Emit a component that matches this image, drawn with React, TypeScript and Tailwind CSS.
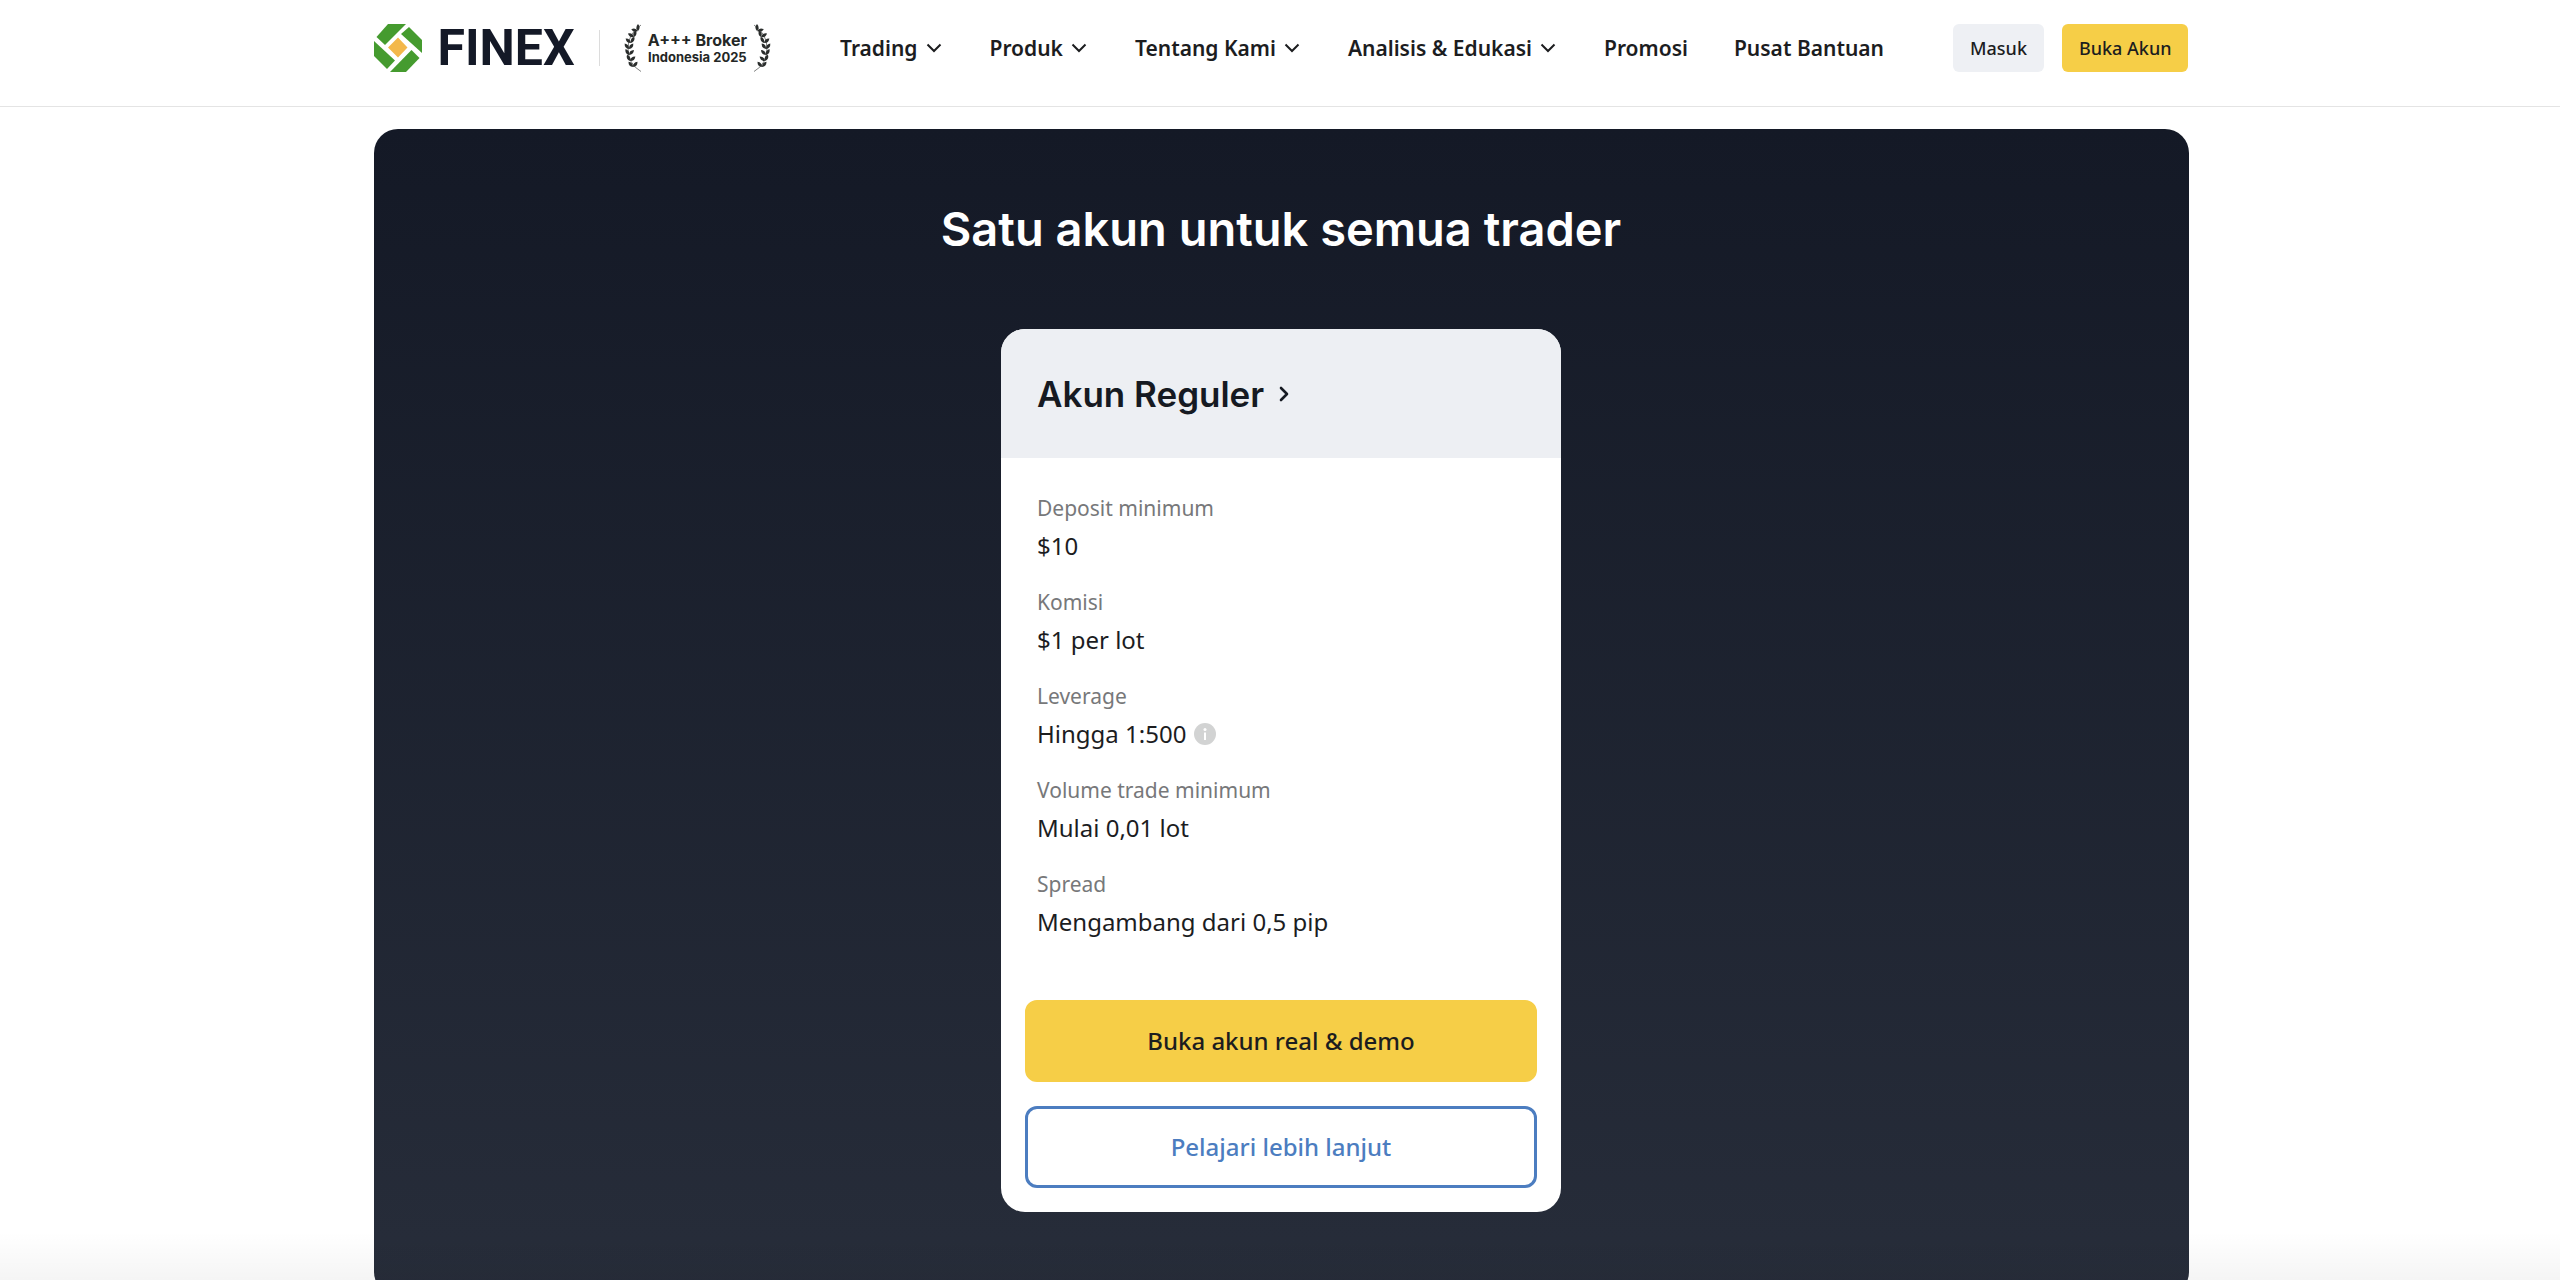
import { ChevronRight } from "lucide-react";

const NAV_ITEMS = [
  { label: "Trading", menu: true },
  { label: "Produk", menu: true },
  { label: "Tentang Kami", menu: true },
  { label: "Analisis & Edukasi", menu: true },
  { label: "Promosi", menu: false },
  { label: "Pusat Bantuan", menu: false },
];

const FEATURES = [
  { label: "Deposit minimum", value: "$10" },
  { label: "Komisi", value: "$1 per lot" },
  { label: "Leverage", value: "Hingga 1:500", info: true },
  { label: "Volume trade minimum", value: "Mulai 0,01 lot" },
  { label: "Spread", value: "Mengambang dari 0,5 pip" },
];

function LogoMark() {
  return (
    <svg viewBox="0 0 48 48" className="size-12" aria-hidden="true">
      <g fill="#459b2f">
        <path d="M14 0H32L11 21L2.500 13Z" />
        <path d="M35 3L48 16V29L27 10Z" />
        <path d="M37.500 26L45.500 34L32 48H16Z" />
        <path d="M0 17L21 36.500L13 45L0 32Z" />
      </g>
      <path d="M24 13.500L33.500 23.500L24 33.500L14 23.500Z" fill="#f3b84b" />
    </svg>
  );
}

function Chevron() {
  return (
    <svg viewBox="0 0 20 20" className="size-5" fill="none" stroke="currentColor" strokeWidth="2" aria-hidden="true">
      <path d="M3.500 6.500L10 13L16.500 6.500" />
    </svg>
  );
}

const LEAVES = [
  { x: 14, y: 3, out: -75, inn: 0 },
  { x: 10, y: 9, out: -60, inn: 15 },
  { x: 7, y: 15, out: -50, inn: 28 },
  { x: 5, y: 21, out: -38, inn: 38 },
  { x: 5, y: 27, out: -30, inn: 45 },
  { x: 6, y: 33, out: -25, inn: 50 },
  { x: 9, y: 39, out: -40, inn: 40 },
];

function Laurel({ flip = false }: { flip?: boolean }) {
  return (
    <svg viewBox="0 0 18 48" className="h-12 w-[18px]" fill="#2a2d2c" aria-hidden="true">
      <g transform={flip ? "translate(18 0) scale(-1 1)" : undefined}>
        <path d="M17 1Q4 10 4 24Q4 40 17 47.500" fill="none" stroke="#2a2d2c" strokeWidth="0.6" />
        {LEAVES.map((leaf) => (
          <g key={leaf.y} transform={`translate(${leaf.x} ${leaf.y + 4})`}>
            <path d="M0 0Q-3.200 -3.500 0 -7Q3.200 -3.500 0 0Z" transform={`rotate(${leaf.out})`} />
            <path d="M0 0Q-3.200 -3.500 0 -7Q3.200 -3.500 0 0Z" transform={`rotate(${leaf.inn})`} />
          </g>
        ))}
      </g>
    </svg>
  );
}

function InfoIcon() {
  return (
    <svg viewBox="0 0 22 22" className="size-[22px]" aria-hidden="true">
      <circle cx="11" cy="11" r="11" fill="#d2d3d3" />
      <circle cx="11" cy="6.500" r="1.500" fill="#fff" />
      <rect x="10" y="9.500" width="2" height="7.500" fill="#fff" />
    </svg>
  );
}

export default function App() {
  return (
    <div className="relative h-screen overflow-hidden bg-white font-['Noto_Sans',sans-serif] text-[#1c1d1f]">
      <header className="border-b border-[#e4e4e4] pt-6 pr-6 pb-[34px] pl-[26px]">
        <div className="mx-auto flex h-12 max-w-[1815px] items-center justify-between">
          <div className="flex items-center">
            <a href="#beranda" className="flex items-center gap-4" aria-label="FINEX">
              <LogoMark />
              <span className="font-['Roboto',sans-serif] text-[50px] leading-12 font-bold text-[#141927]">FINEX</span>
            </a>
            <div className="ml-6 h-9 w-px bg-[#dcdcdc]" />
            <div className="ml-6 flex items-center gap-1.5">
              <Laurel />
              <div className="flex flex-col text-center font-['Inter',sans-serif] font-bold text-[#242726]">
                <span className="text-[16px] leading-[18px]">A+++ Broker</span>
                <span className="text-[13px] leading-4">Indonesia 2025</span>
              </div>
              <Laurel flip />
            </div>
          </div>

          <nav className="flex items-center gap-[46px] text-[21px] leading-7 font-semibold">
            {NAV_ITEMS.map((item) =>
              item.menu ? (
                <button key={item.label} type="button" className="flex items-center gap-1.5">
                  {item.label}
                  <Chevron />
                </button>
              ) : (
                <a key={item.label} href="#menu">
                  {item.label}
                </a>
              ),
            )}
          </nav>

          <div className="flex gap-[18px] text-[18px] font-medium">
            <button type="button" className="h-12 rounded-md bg-[#eef0f4] px-[17px]">
              Masuk
            </button>
            <button type="button" className="h-12 rounded-md bg-[#f6ce47] px-[17px]">
              Buka Akun
            </button>
          </div>
        </div>
      </header>

      <main className="pt-[22px] pr-6 pl-[26px]">
        <section className="mx-auto flex max-w-[1815px] flex-col items-center rounded-3xl bg-linear-to-b from-[#141926] to-[#272d3a] px-6 pt-[68px] pb-[84px]">
          <h1 className="text-center font-['Inter',sans-serif] text-[47px] leading-16 font-semibold text-white">
            Satu akun untuk semua trader
          </h1>

          <article className="mt-[68px] w-full max-w-[560px] overflow-hidden rounded-3xl bg-white">
            <div className="bg-[#edeff3] px-9 pt-[41px] pb-10">
              <h2 className="font-['Inter',sans-serif] text-[35px] leading-12 font-semibold text-[#161a22]">
                <a href="#akun-reguler" className="flex items-center gap-2">
                  Akun Reguler
                  <ChevronRight className="size-6" strokeWidth={2.6} />
                </a>
              </h2>
            </div>

            <dl className="flex flex-col gap-[18px] px-9 pt-8">
              {FEATURES.map((feature) => (
                <div key={feature.label}>
                  <dt className="text-[21px] leading-9 text-[#77787a]">{feature.label}</dt>
                  <dd className="flex items-center gap-2 text-[24px] leading-10">
                    {feature.value}
                    {feature.info && (
                      <button type="button" aria-label="Info">
                        <InfoIcon />
                      </button>
                    )}
                  </dd>
                </div>
              ))}
            </dl>

            <div className="flex flex-col gap-6 px-6 pt-[58px] pb-6 text-center text-[24px] leading-9 font-medium">
              <a href="#buka-akun" className="rounded-xl border-3 border-[#f6ce47] bg-[#f6ce47] py-5">
                Buka akun real &amp; demo
              </a>
              <a href="#pelajari" className="rounded-xl border-3 border-[#4c7dc0] py-5 text-[#4c7dc0]">
                Pelajari lebih lanjut
              </a>
            </div>
          </article>
        </section>
      </main>

      <div className="pointer-events-none absolute inset-x-0 bottom-0 h-12 bg-linear-to-t from-black/4 to-transparent" />
    </div>
  );
}
